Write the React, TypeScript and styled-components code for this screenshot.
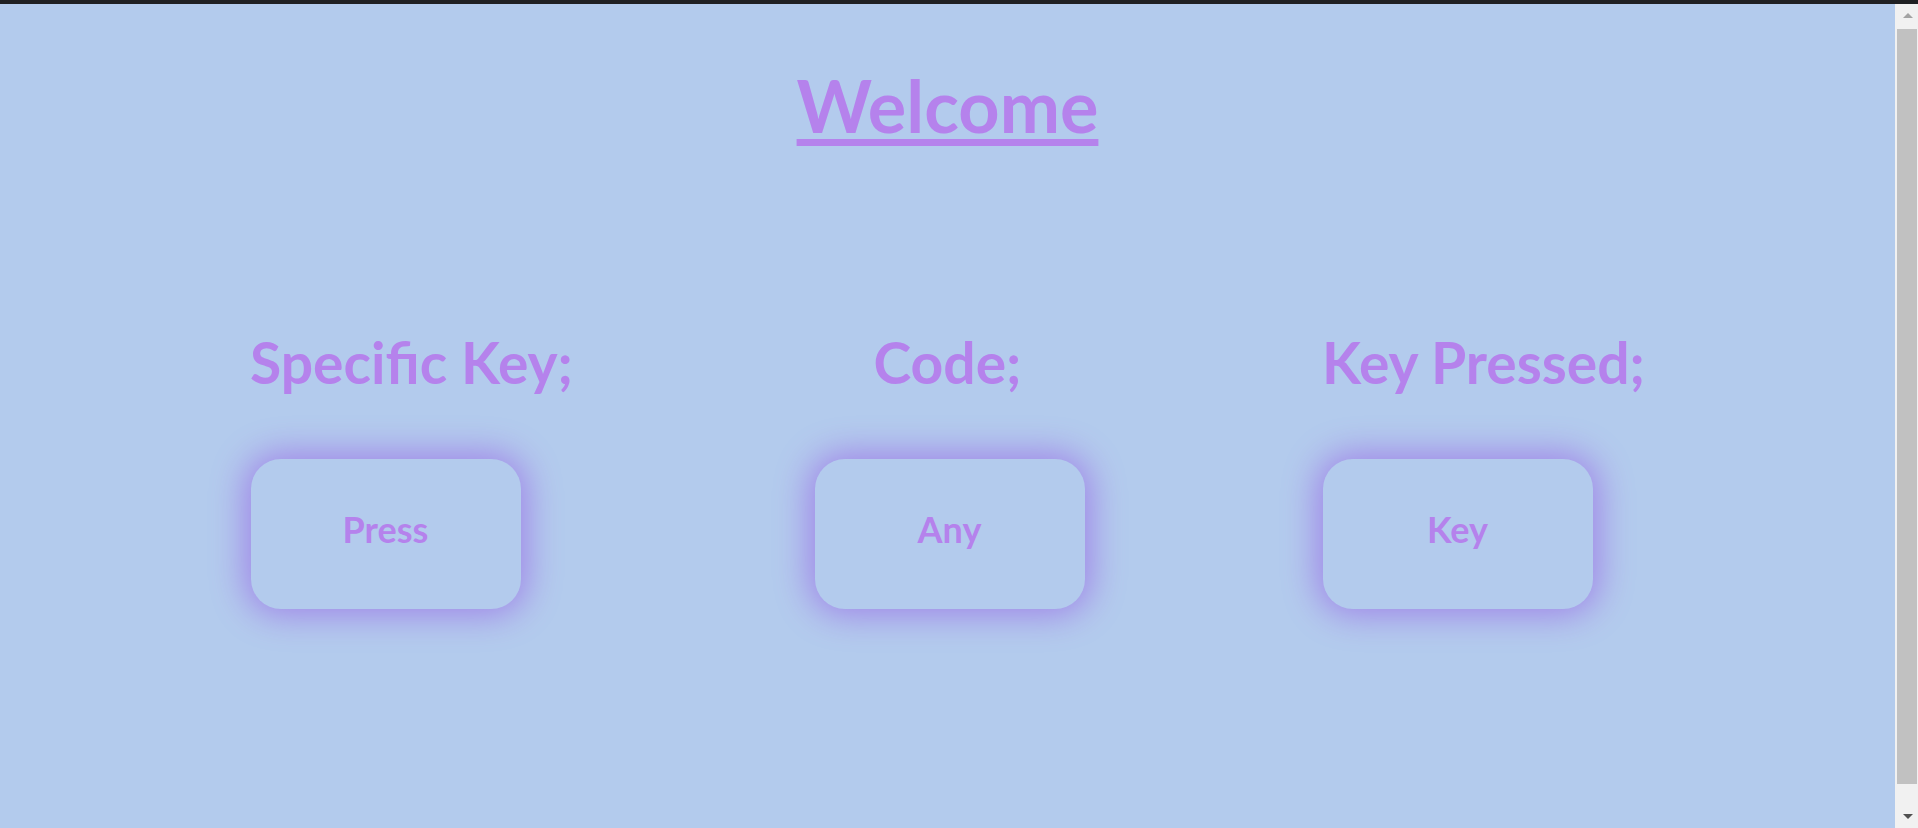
import styled, { createGlobalStyle } from 'styled-components';

const GlobalStyle = createGlobalStyle`
  html, body {
    margin: 0;
    padding: 0;
    height: 100%;
    overflow: hidden;
    background-color: #b3cbed;
  }

  body {
    font-family: "Lato", "Open Sans", sans-serif;
  }
`;

const keyColumns = [
  { title: 'Specific Key;', label: 'Press', shift: -26 },
  { title: 'Code;', label: 'Any', shift: 2 },
  { title: 'Key Pressed;', label: 'Key', shift: -26 },
];

const App = () => {
  return (
    <>
      <GlobalStyle />
      <StyleIn.TopStrip />
      <StyleIn.Shell>
        <StyleIn.Page>
          <StyleIn.Title>Welcome</StyleIn.Title>
          <StyleIn.KeyGrid>
            {
              keyColumns.map((col, index) => {
                return (
                  <StyleIn.KeyColumn key={index}>
                    <StyleIn.KeyHeading>{ col.title }</StyleIn.KeyHeading>
                    <StyleIn.KeyBox $shift={col.shift}>{ col.label }</StyleIn.KeyBox>
                  </StyleIn.KeyColumn>
                )
              })
            }
          </StyleIn.KeyGrid>
        </StyleIn.Page>
        <StyleIn.ScrollRail>
          <StyleIn.ScrollArrow $dir="up" />
          <StyleIn.ScrollThumb />
          <StyleIn.ScrollArrow $dir="down" />
        </StyleIn.ScrollRail>
      </StyleIn.Shell>
    </>
  );
};

const StyleIn = {
  TopStrip: styled.div`
    width: 100%;
    height: 4px;
    background-color: #1f2023;
  `,

  Shell: styled.div`
    height: calc(100vh - 4px);
    display: flex;
    overflow: hidden;
  `,

  Page: styled.div`
    flex: 1;
    min-width: 0;
    display: flex;
    flex-direction: column;
    align-items: center;
    color: #b582ec;
  `,

  ScrollRail: styled.div`
    width: 23px;
    flex-shrink: 0;
    display: flex;
    flex-direction: column;
    background-color: #f1f1f1;
  `,

  ScrollArrow: styled.div<{ $dir: 'up' | 'down' }>`
    height: 23px;
    flex-shrink: 0;
    display: flex;
    justify-content: center;
    align-items: center;
    padding-left: 2px;
    box-sizing: border-box;

    &::before {
      content: '';
      width: 0;
      height: 0;
      border-left: 5px solid transparent;
      border-right: 5px solid transparent;
      ${(p) => (p.$dir === 'up'
        ? 'border-bottom: 5px solid #a3a3a3;'
        : 'border-top: 5px solid #505050;')}
    }
  `,

  ScrollThumb: styled.div`
    flex: 1;
    margin: 2px 1px 21px 2px;
    background-color: #c1c1c1;
  `,

  Title: styled.h1`
    margin: 58px 0 0;
    font-size: 72px;
    font-weight: 700;
    line-height: 1.2;
    text-decoration: underline;
    text-decoration-thickness: 7px;
    text-underline-offset: 6px;
  `,

  KeyGrid: styled.div`
    width: 1608px;
    display: grid;
    grid-template-columns: repeat(3, 1fr);
    margin-top: 180px;
  `,

  KeyColumn: styled.div`
    display: flex;
    flex-direction: column;
    align-items: center;
  `,

  KeyHeading: styled.h2`
    margin: 0;
    font-size: 57px;
    font-weight: 700;
    line-height: 1.2;
  `,

  KeyBox: styled.div<{ $shift: number }>`
    width: 270px;
    height: 150px;
    margin-top: 62px;
    margin-left: ${(p) => (p.$shift > 0 ? p.$shift * 2 : 0)}px;
    margin-right: ${(p) => (p.$shift < 0 ? -p.$shift * 2 : 0)}px;
    padding-bottom: 9px;
    display: flex;
    justify-content: center;
    align-items: center;
    box-sizing: border-box;
    border-radius: 30px;
    background-color: #b3cbed;
    box-shadow: 0 0 34px 6px #a085e8;
    font-size: 36px;
    font-weight: 700;
  `,
};

export default App;
